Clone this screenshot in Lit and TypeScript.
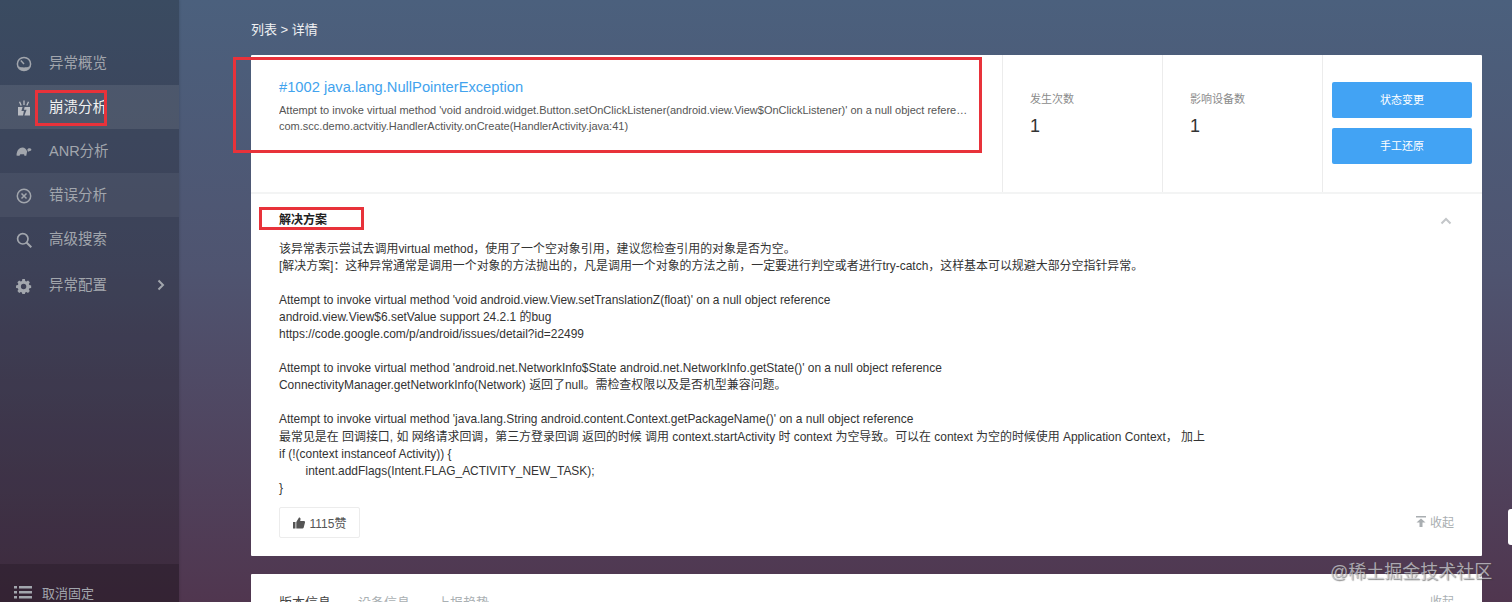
import { LitElement, html, css, svg } from "lit";
import { customElement } from "lit/decorators.js";

const icons: Record<string, unknown> = {
  gauge: svg`<circle cx="8" cy="8" r="6.6" fill="none" stroke="currentColor" stroke-width="1.5"/><path d="M8 8 4.800 4.600" stroke="currentColor" stroke-width="1.500"/><path d="M2.600 10.200c1.800 1.600 9 1.600 10.800 0l-1.500 3.800H4.100z" fill="currentColor"/>`,
  crash: svg`<path d="M2 7h4.600L5.400 11h2.500L7 15.500H2zM14 7H8.600L8 9.800h2.600L8.400 15.500H14z" fill="currentColor"/><path d="M8 .5v4.500M3.500 1.700 5.200 5.500M12.500 1.700 10.800 5.500" stroke="currentColor" stroke-width="1.300"/>`,
  turtle: svg`<path d="M.5 11.500C.7 6.300 3.500 3.600 6.300 3.600c2.500 0 4.200 1.700 4.800 4l-.8 4.200H8.400l-.3-1.500H4.300l-.8 1.500H1.900z" fill="currentColor"/><path d="M11.300 5.600c.8-1.500 3.200-1.700 4-.4.300.8-.4 1.700-1.400 1.700l-2 .9z" fill="currentColor"/>`,
  error: svg`<circle cx="8" cy="8" r="6.700" fill="none" stroke="currentColor" stroke-width="1.500"/><path d="m5.500 5.500 5 5m0-5-5 5" stroke="currentColor" stroke-width="1.500"/>`,
  search: svg`<circle cx="6.800" cy="6.800" r="5.200" fill="none" stroke="currentColor" stroke-width="1.700"/><path d="m10.500 10.500 4.800 4.800" stroke="currentColor" stroke-width="2"/>`,
  gear: svg`<path fill-rule="evenodd" fill="currentColor" d="M6.600 .8h2.800l.4 2 1.300.6 1.800-1.100 2 2-1.100 1.800.6 1.300 2 .4v2.800l-2 .4-.6 1.300 1.100 1.800-2 2-1.800-1.100-1.300.6-.4 2H6.600l-.4-2-1.300-.6-1.800 1.100-2-2 1.100-1.800-.6-1.300-2-.4V7.800l2-.4.6-1.300L1.100 4.300l2-2 1.800 1.100 1.300-.6zM8 6a3 3 0 1 0 0 6 3 3 0 0 0 0-6z" transform="translate(.4 .4) scale(.9)"/>`,
};

const navItems = [
  { icon: "gauge", label: "异常概览", cls: "" },
  { icon: "crash", label: "崩溃分析", cls: "active" },
  { icon: "turtle", label: "ANR分析", cls: "" },
  { icon: "error", label: "错误分析", cls: "hover" },
  { icon: "search", label: "高级搜索", cls: "" },
  { icon: "gear", label: "异常配置", cls: "last" },
];

const solution = [
  "该异常表示尝试去调用virtual method，使用了一个空对象引用，建议您检查引用的对象是否为空。",
  "[解决方案]：这种异常通常是调用一个对象的方法抛出的，凡是调用一个对象的方法之前，一定要进行判空或者进行try-catch，这样基本可以规避大部分空指针异常。",
  "",
  "Attempt to invoke virtual method 'void android.view.View.setTranslationZ(float)' on a null object reference",
  "android.view.View$6.setValue support 24.2.1 的bug",
  "https://code.google.com/p/android/issues/detail?id=22499",
  "",
  "Attempt to invoke virtual method 'android.net.NetworkInfo$State android.net.NetworkInfo.getState()' on a null object reference",
  "ConnectivityManager.getNetworkInfo(Network) 返回了null。需检查权限以及是否机型兼容问题。",
  "",
  "Attempt to invoke virtual method 'java.lang.String android.content.Context.getPackageName()' on a null object reference",
  "最常见是在 回调接口, 如 网络请求回调，第三方登录回调 返回的时候 调用 context.startActivity 时 context 为空导致。可以在 context 为空的时候使用 Application Context， 加上",
  "if (!(context instanceof Activity)) {",
  "        intent.addFlags(Intent.FLAG_ACTIVITY_NEW_TASK);",
  "}",
];

@customElement("app-root")
export class AppRoot extends LitElement {
  static styles = css`
    :host {
      display: flex;
      position: relative;
      width: 1512px;
      height: 602px;
      overflow: hidden;
      font-family: "Liberation Sans", "Noto Sans CJK SC", sans-serif;
      font-size: 12px;
      background: linear-gradient(180deg, #4b607d 0%, #4f5470 45%, #50364f 100%);
    }
    .side {
      width: 179px;
      flex: none;
      display: flex;
      flex-direction: column;
      padding-top: 41px;
      box-sizing: border-box;
      background: rgba(0, 0, 0, 0.22);
      color: #a2a6ad;
      box-shadow: 1px 0 2px rgba(0, 0, 0, 0.1);
    }
    .nav {
      height: 44px;
      display: flex;
      align-items: center;
      padding: 0 0 4px 16px;
      box-sizing: border-box;
      font-size: 14.5px;
      flex: none;
    }
    .nav svg { width: 16px; height: 16px; flex: none; margin: 5px 17px 0 0; }
    .nav.active { background: rgba(255, 255, 255, 0.09); color: #f2f2f2; }
    .nav.active svg { color: #b9bcc2; }
    .nav.hover { background: rgba(255, 255, 255, 0.055); }
    .nav.last { margin-top: 1px; height: 46px; }
    .nav .chev { margin: 3px 14px 0 auto; width: 8px; height: 12px; }
    .spacer { flex: 1; }
    .unpin {
      height: 38px;
      flex: none;
      display: flex;
      align-items: center;
      padding: 18px 0 0 14px;
      box-sizing: border-box;
      background: rgba(0, 0, 0, 0.16);
      font-size: 13px;
      gap: 10px;
    }
    .unpin svg { width: 18px; height: 15px; }
    .main {
      flex: 1;
      padding: 0 30px 0 72px;
      min-width: 0;
      display: flex;
      flex-direction: column;
    }
    .crumb {
      height: 55px;
      flex: none;
      padding-top: 1px;
      box-sizing: border-box;
      display: flex;
      align-items: center;
      color: #f0f1f3;
      font-size: 13px;
    }
    .card { background: #fff; flex: none; border-radius: 1px; }
    .top { display: flex; height: 137px; border-bottom: 2px solid #f3f4f4; box-sizing: content-box; }
    .info { flex: 1; min-width: 0; padding: 23px 34px 0 28px; }
    .title { color: #42a3ee; font-size: 14.7px; line-height: 18px; }
    .desc { color: #555; font-size: 11px; line-height: 16px; margin-top: 6px; }
    .desc div { white-space: nowrap; overflow: hidden; text-overflow: ellipsis; }
    .stat {
      width: 160px;
      flex: none;
      box-sizing: border-box;
      border-left: 1px solid #ececec;
      padding: 36px 0 0 27px;
      color: #8b8b8b;
      font-size: 11px;
      line-height: 16px;
    }
    .stat b { display: block; font-weight: 400; color: #333; font-size: 18px; line-height: 22px; margin-top: 8px; }
    .actions {
      width: 160px;
      flex: none;
      box-sizing: border-box;
      border-left: 1px solid #ececec;
      padding: 27px 10px 0 9px;
      display: flex;
      flex-direction: column;
      gap: 10px;
    }
    .btn {
      height: 36px;
      padding-bottom: 2px;
      box-sizing: border-box;
      display: flex;
      align-items: center;
      justify-content: center;
      background: #42a3f4;
      color: #fff;
      font-size: 11px;
      border-radius: 2px;
    }
    .sol { padding: 18px 28px 0 28px; position: relative; height: 362px; box-sizing: border-box; }
    .sol h3 { margin: 0; font-size: 12px; line-height: 17px; color: #222; font-weight: 700; }
    .caret { position: absolute; right: 30px; top: 23px; width: 12px; height: 8px; color: #c3c6c9; }
    .body { margin-top: 12px; color: #333; font-size: 11.94px; line-height: 17.05px; height: 260px; }
    .body div { white-space: pre; min-height: 17.05px; }
    .foot { display: flex; justify-content: space-between; align-items: center; margin-top: 6px; }
    .like {
      width: 81px;
      height: 31px;
      box-sizing: border-box;
      border: 1px solid #ececec;
      border-radius: 2px;
      display: flex;
      align-items: center;
      justify-content: center;
      gap: 5px;
      color: #555;
    }
    .like svg { width: 12px; height: 12px; }
    .collapse { display: flex; align-items: center; gap: 4px; color: #a9aeb1; font-size: 12px; padding: 0 0 2px 1px; }
    .collapse svg { width: 10px; height: 11px; }
    .second { margin-top: 18px; height: 40px; padding: 18px 28px 0; box-sizing: border-box; display: flex; color: #aab0b3; font-size: 13px; }
    .second span { margin-right: 27px; white-space: nowrap; }
    .second .on { color: #444; }
    .second .r { margin: 0 0 0 auto; font-size: 12px; }
    .mark { position: absolute; border: 3px solid #e8323a; box-sizing: border-box; pointer-events: none; }
    .m1 { left: 233px; top: 57px; width: 749px; height: 96px; }
    .m2 { left: 35px; top: 90px; width: 72px; height: 36px; }
    .m3 { left: 259px; top: 207px; width: 105px; height: 23px; }
    .wm {
      position: absolute;
      left: 1330px;
      top: 560px;
      font-size: 18px;
      line-height: 24px;
      color: rgba(205, 205, 210, 0.75);
      text-shadow: 1px 1px 1px rgba(60, 60, 60, 0.6);
      white-space: nowrap;
    }
    .tab-edge {
      position: absolute;
      left: 1508px;
      top: 509px;
      width: 8px;
      height: 36px;
      background: #fff;
      border-radius: 3px;
    }
  `;

  render() {
    return html`
      <aside class="side">
        ${navItems.map(
          (n) => html`<div class="nav ${n.cls}">
            <svg viewBox="0 0 16 16">${icons[n.icon]}</svg>
            <span>${n.label}</span>
            ${n.cls === "last"
              ? html`<svg class="chev" viewBox="0 0 8 12"><path d="m1.500 1.500 4.500 4.500-4.500 4.500" fill="none" stroke="currentColor" stroke-width="2"/></svg>`
              : ""}
          </div>`
        )}
        <div class="spacer"></div>
        <div class="unpin">
          <svg viewBox="0 0 18 15" fill="currentColor">
            <path d="M0 1h3v2.500H0zM5 1h13v2.500H5zM0 6h3v2.500H0zM5 6h13v2.500H5zM0 11h3v2.500H0zM5 11h13v2.500H5z"/>
          </svg>
          <span>取消固定</span>
        </div>
      </aside>
      <main class="main">
        <div class="crumb">列表 &gt; 详情</div>
        <section class="card">
          <div class="top">
            <div class="info">
              <div class="title">#1002 java.lang.NullPointerException</div>
              <div class="desc">
                <div>Attempt to invoke virtual method 'void android.widget.Button.setOnClickListener(android.view.View$OnClickListener)' on a null object reference</div>
                <div>com.scc.demo.actvitiy.HandlerActivity.onCreate(HandlerActivity.java:41)</div>
              </div>
            </div>
            <div class="stat">发生次数<b>1</b></div>
            <div class="stat">影响设备数<b>1</b></div>
            <div class="actions">
              <div class="btn">状态变更</div>
              <div class="btn">手工还原</div>
            </div>
          </div>
          <div class="sol">
            <h3>解决方案</h3>
            <svg class="caret" viewBox="0 0 12 8"><path d="m1.500 6.500 4.500-4.500 4.500 4.500" fill="none" stroke="currentColor" stroke-width="2"/></svg>
            <div class="body">${solution.map((l) => html`<div>${l}</div>`)}</div>
            <div class="foot">
              <div class="like">
                <svg viewBox="0 0 12 12" fill="#555"><path d="M0 5h2.500v6.500H0zM3.300 5 6 .5c1.200 0 1.700.8 1.500 1.800L7.200 4H11c.8 0 1.200.7 1 1.400l-1.300 5.200c-.2.600-.6.900-1.200.9H3.300z"/></svg>
                <span>1115赞</span>
              </div>
              <div class="collapse">
                <svg viewBox="0 0 10 11" fill="#a9aeb1"><path d="M0 0h10v1.500H0zM5 2.500 9.500 6.500H6.500V11h-3V6.500H.5z"/></svg>
                <span>收起</span>
              </div>
            </div>
          </div>
        </section>
        <section class="card second">
          <span class="on">版本信息</span><span>设备信息</span><span>上报趋势</span><span class="r">收起</span>
        </section>
      </main>
      <div class="mark m1"></div>
      <div class="mark m2"></div>
      <div class="mark m3"></div>
      <div class="wm">@稀土掘金技术社区</div>
      <div class="tab-edge"></div>
    `;
  }
}
